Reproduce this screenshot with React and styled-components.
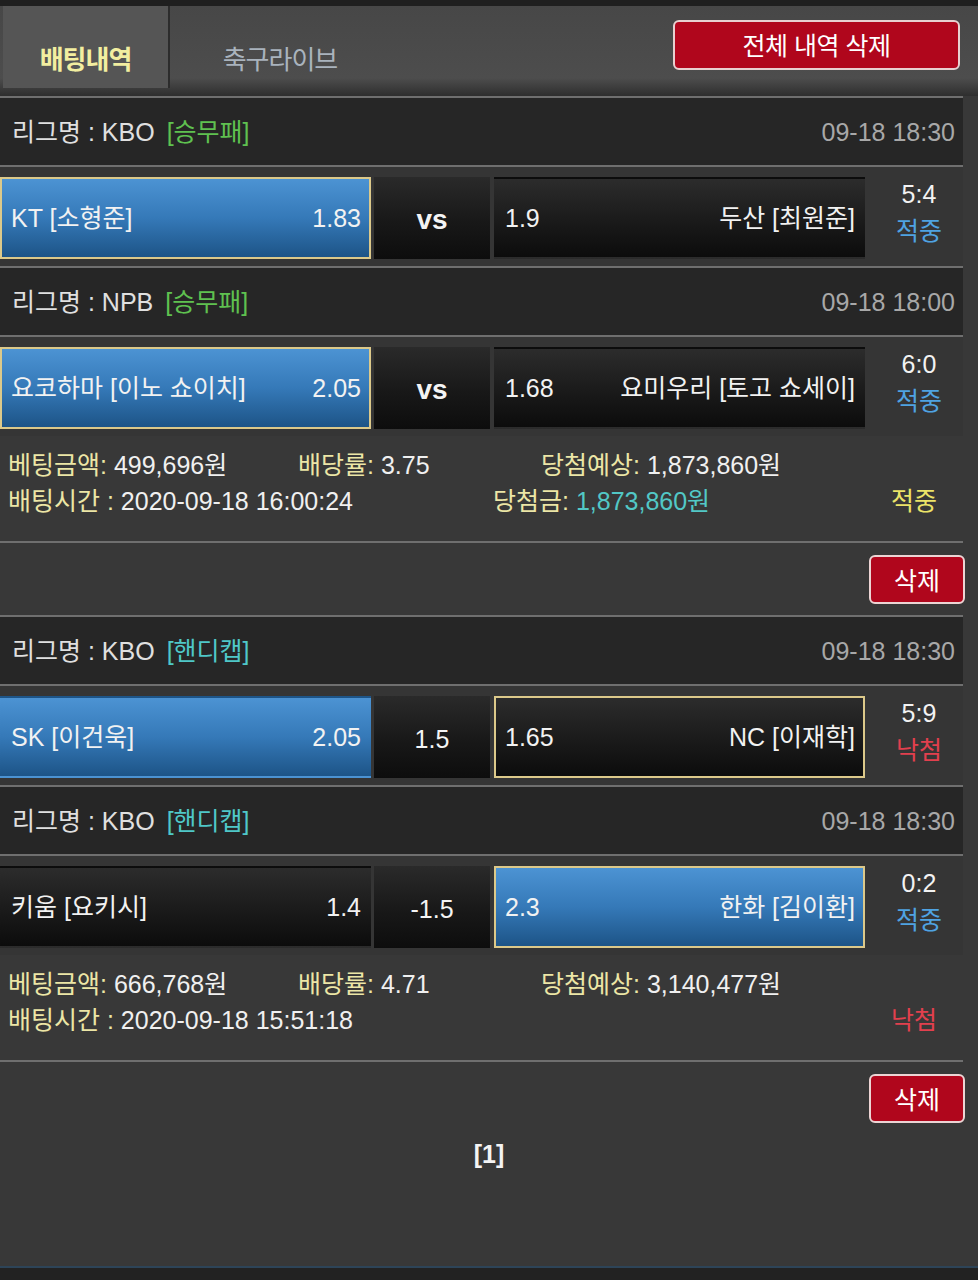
import React from 'react';
import styled, { createGlobalStyle, css } from 'styled-components';

const GlobalStyle = createGlobalStyle`
  html, body {
    margin: 0;
    padding: 0;
    background: #383838;
  }
  body {
    font-family: "Liberation Sans", "Noto Sans CJK KR", sans-serif;
  }
`;

const Page = styled.div`
  width: 978px;
  height: 1280px;
  background: #383838;
  display: flex;
  flex-direction: column;
  overflow: hidden;
`;

const TopStrip = styled.div`
  height: 6px;
  background: #1f1f1f;
`;

const TabBar = styled.div`
  height: 90px;
  display: flex;
  align-items: stretch;
  background: linear-gradient(180deg, #474747 0%, #4d4d4d 80%, #2e2e2e 100%);
  padding-left: 3px;
  padding-right: 18px;
`;

const Tab = styled.div`
  width: ${p => (p.active ? '167px' : '220px')};
  margin-bottom: 8px;
  display: flex;
  align-items: center;
  justify-content: center;
  padding-top: 20px;
  box-sizing: border-box;
  font-size: 26px;
  letter-spacing: -1px;
  ${p => p.active
    ? css`
      background: #555555;
      border-right: 2px solid #2c2c2c;
      color: #f2eea0;
      font-weight: bold;
    `
    : css`
      color: #a9b3bd;
    `}
`;

const AllDeleteButton = styled.button`
  margin-left: auto;
  margin-top: 14px;
  align-self: flex-start;
  width: 287px;
  height: 50px;
  padding-bottom: 4px;
  border: 2px solid #e8d0d0;
  border-radius: 6px;
  background: #b0061c;
  color: #ffffff;
  font-family: inherit;
  font-size: 25px;
  letter-spacing: -0.5px;
`;

const Content = styled.div`
  width: 963px;
  display: flex;
  flex-direction: column;
`;

const Divider = styled.div`
  height: 2px;
  background: #6f6f6f;
`;

const LeagueHeader = styled.div`
  height: 67px;
  background: #262626;
  display: flex;
  align-items: center;
  padding: 0 8px 0 12px;
  font-size: 25px;
  color: #e0e0e0;
  & > span { line-height: 30px; }
`;

const MarketTag = styled.span`
  margin-left: 12px;
  color: ${p => p.color};
`;

const Time = styled.span`
  margin-left: auto;
  color: #a8a8a8;
`;

const MatchRow = styled.div`
  height: 99px;
  box-sizing: border-box;
  padding: 10px 0 7px;
  display: flex;
  align-items: stretch;
  background: #353535;
`;

const TeamCell = styled.div`
  width: 371px;
  box-sizing: border-box;
  display: flex;
  align-items: center;
  justify-content: space-between;
  padding: 0 8px 0 9px;
  font-size: 25px;
  color: #f2f2f2;
  background: ${p => (p.picked
    ? 'linear-gradient(180deg, #4c93d3 0%, #3579b8 50%, #1d5487 100%)'
    : 'linear-gradient(180deg, #2c2c2c 0%, #1a1a1a 55%, #0c0c0c 100%)')};
  border: 2px solid ${p => (p.selected ? '#dcc98a' : 'transparent')};
  & > span { line-height: 30px; }
`;

const MidCell = styled.div`
  width: 116px;
  margin: 0 4px 0 3px;
  display: flex;
  align-items: center;
  justify-content: center;
  padding-top: 4px;
  font-size: ${p => (p.bold ? '28px' : '25px')};
  font-weight: ${p => (p.bold ? 'bold' : 'normal')};
  color: #f4f4f4;
  background: linear-gradient(180deg, #2a2a2a 0%, #181818 55%, #0d0d0d 100%);
`;

const ScoreCol = styled.div`
  flex: 1;
  display: flex;
  flex-direction: column;
  align-items: center;
  justify-content: center;
  gap: 5px;
  font-size: 25px;
  padding: 0 0 12px 10px;
  color: #f2f2f2;
  & > span { line-height: 32px; }
`;

const ResultText = styled.span`
  color: ${p => p.color};
`;

const BetInfo = styled.div`
  height: 105px;
  box-sizing: border-box;
  padding: 14px 0 0 8px;
  display: flex;
  flex-direction: column;
  gap: 10px;
  font-size: 25px;
`;

const InfoLine = styled.div`
  display: flex;
  align-items: center;
  height: 26px;
`;

const InfoItem = styled.div`
  width: ${p => p.w}px;
  flex-shrink: 0;
  white-space: nowrap;
  color: #f0f0f0;
`;

const Label = styled.span`
  color: #ece6a6;
`;

const Money = styled.span`
  color: #52c8c6;
`;

const DeleteRow = styled.div`
  height: 72px;
  display: flex;
  justify-content: flex-end;
  align-items: flex-start;
  padding-top: 12px;
  box-sizing: border-box;
  margin-right: -2px;
`;

const DeleteButton = styled.button`
  width: 96px;
  height: 49px;
  padding-bottom: 3px;
  border: 2px solid #ecd4d4;
  border-radius: 6px;
  background: #b0061c;
  color: #ffffff;
  font-family: inherit;
  font-size: 25px;
`;

const Pager = styled.div`
  text-align: center;
  padding-top: 6px;
  font-size: 25px;
  font-weight: bold;
  color: #f4f4f4;
`;

const Filler = styled.div`
  flex: 1;
`;

const BottomBar = styled.div`
  height: 12px;
  border-top: 2px solid #2d4458;
  background: #222222;
`;

const RESULT_COLOR = { '적중': '#4fa3e2', '낙첨': '#e2404e' };

const bets = [
  {
    games: [
      {
        league: 'KBO', market: '[승무패]', marketColor: '#5fc150', time: '09-18 18:30',
        home: 'KT [소형준]', homeOdds: '1.83', mid: 'VS', away: '두산 [최원준]', awayOdds: '1.9',
        pick: 'home', score: '5:4', result: '적중',
      },
      {
        league: 'NPB', market: '[승무패]', marketColor: '#5fc150', time: '09-18 18:00',
        home: '요코하마 [이노 쇼이치]', homeOdds: '2.05', mid: 'VS', away: '요미우리 [토고 쇼세이]', awayOdds: '1.68',
        pick: 'home', score: '6:0', result: '적중',
      },
    ],
    amount: '499,696원', rate: '3.75', expect: '1,873,860원', time: '2020-09-18 16:00:24',
    win: '1,873,860원', result: '적중', resultColor: '#ece468',
  },
  {
    games: [
      {
        league: 'KBO', market: '[핸디캡]', marketColor: '#4fc8c8', time: '09-18 18:30',
        home: 'SK [이건욱]', homeOdds: '2.05', mid: '1.5', away: 'NC [이재학]', awayOdds: '1.65',
        pick: 'away', blueSide: 'home', score: '5:9', result: '낙첨',
      },
      {
        league: 'KBO', market: '[핸디캡]', marketColor: '#4fc8c8', time: '09-18 18:30',
        home: '키움 [요키시]', homeOdds: '1.4', mid: '-1.5', away: '한화 [김이환]', awayOdds: '2.3',
        pick: 'away', score: '0:2', result: '적중',
      },
    ],
    amount: '666,768원', rate: '4.71', expect: '3,140,477원', time: '2020-09-18 15:51:18',
    win: null, result: '낙첨', resultColor: '#e2404e',
  },
];

const Game = ({ g }) => {
  const blue = g.blueSide || g.pick;
  return (
    <>
      <LeagueHeader>
        <span>리그명 : {g.league}</span>
        <MarketTag color={g.marketColor}>{g.market}</MarketTag>
        <Time>{g.time}</Time>
      </LeagueHeader>
      <Divider />
      <MatchRow>
        <TeamCell picked={blue === 'home'} selected={g.pick === 'home'}>
          <span>{g.home}</span>
          <span>{g.homeOdds}</span>
        </TeamCell>
        <MidCell bold={g.mid === 'VS'}>{g.mid === 'VS' ? 'vs' : g.mid}</MidCell>
        <TeamCell picked={blue === 'away'} selected={g.pick === 'away'}>
          <span>{g.awayOdds}</span>
          <span>{g.away}</span>
        </TeamCell>
        <ScoreCol>
          <span>{g.score}</span>
          <ResultText color={RESULT_COLOR[g.result]}>{g.result}</ResultText>
        </ScoreCol>
      </MatchRow>
    </>
  );
};

const Bet = ({ bet }) => (
  <>
    {bet.games.map((g, i) => (
      <React.Fragment key={i}>
        {i > 0 && <Divider />}
        <Game g={g} />
      </React.Fragment>
    ))}
    <BetInfo>
      <InfoLine>
        <InfoItem w={290}><Label>베팅금액:</Label> {bet.amount}</InfoItem>
        <InfoItem w={243}><Label>배당률:</Label> {bet.rate}</InfoItem>
        <InfoItem w={300}><Label>당첨예상:</Label> {bet.expect}</InfoItem>
      </InfoLine>
      <InfoLine>
        <InfoItem w={485}><Label>배팅시간 :</Label> {bet.time}</InfoItem>
        <InfoItem w={398}>
          {bet.win && <><Label>당첨금:</Label> <Money>{bet.win}</Money></>}
        </InfoItem>
        <InfoItem w={60}><ResultText color={bet.resultColor}>{bet.result}</ResultText></InfoItem>
      </InfoLine>
    </BetInfo>
    <Divider />
    <DeleteRow>
      <DeleteButton>삭제</DeleteButton>
    </DeleteRow>
  </>
);

export default function App() {
  return (
    <Page>
      <GlobalStyle />
      <TopStrip />
      <TabBar>
        <Tab active>배팅내역</Tab>
        <Tab>축구라이브</Tab>
        <AllDeleteButton>전체 내역 삭제</AllDeleteButton>
      </TabBar>
      <Content>
        {bets.map((bet, i) => (
          <React.Fragment key={i}>
            <Divider />
            <Bet bet={bet} />
          </React.Fragment>
        ))}
      </Content>
      <Pager>[1]</Pager>
      <Filler />
      <BottomBar />
    </Page>
  );
}
